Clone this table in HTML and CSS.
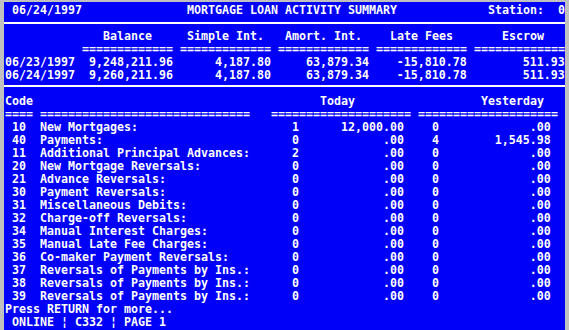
FILE: index.html
```html
<!DOCTYPE html>
<html>
<head>
<meta charset="utf-8">
<title>Mortgage Loan Activity Summary</title>
<link rel="stylesheet" href="styles.css">
</head>
<body>
<div class="window">
  <div class="screen">
    <div class="row title"><span class="date"> 06/24/1997</span><span class="heading">MORTGAGE LOAN ACTIVITY SUMMARY</span><span class="station">Station:  0</span></div>
    <div class="rule"></div>
    <div class="row pre">              Balance     Simple Int.   Amort. Int.    Late Fees       Escrow</div>
    <div class="row pre">           ============= ============= ============= ============= =============</div>
    <div class="row sum"><span>06/23/1997</span><span>9,248,211.96</span><span>4,187.80</span><span>63,879.34</span><span>-15,810.78</span><span>511.93</span></div>
    <div class="row sum"><span>06/24/1997</span><span>9,260,211.96</span><span>4,187.80</span><span>63,879.34</span><span>-15,810.78</span><span>511.93</span></div>
    <div class="rule rule2"></div>
    <div class="row pre">Code                                         Today                  Yesterday</div>
    <div class="row pre">==== ==============================   ==================== ====================</div>
    <div class="row act"><span>10</span><span>New Mortgages:</span><span>1</span><span>12,000.00</span><span>0</span><span>.00</span></div>
    <div class="row act"><span>40</span><span>Payments:</span><span>0</span><span>.00</span><span>4</span><span>1,545.98</span></div>
    <div class="row act"><span>11</span><span>Additional Principal Advances:</span><span>2</span><span>.00</span><span>0</span><span>.00</span></div>
    <div class="row act"><span>20</span><span>New Mortgage Reversals:</span><span>0</span><span>.00</span><span>0</span><span>.00</span></div>
    <div class="row act"><span>21</span><span>Advance Reversals:</span><span>0</span><span>.00</span><span>0</span><span>.00</span></div>
    <div class="row act"><span>30</span><span>Payment Reversals:</span><span>0</span><span>.00</span><span>0</span><span>.00</span></div>
    <div class="row act"><span>31</span><span>Miscellaneous Debits:</span><span>0</span><span>.00</span><span>0</span><span>.00</span></div>
    <div class="row act"><span>32</span><span>Charge-off Reversals:</span><span>0</span><span>.00</span><span>0</span><span>.00</span></div>
    <div class="row act"><span>34</span><span>Manual Interest Charges:</span><span>0</span><span>.00</span><span>0</span><span>.00</span></div>
    <div class="row act"><span>35</span><span>Manual Late Fee Charges:</span><span>0</span><span>.00</span><span>0</span><span>.00</span></div>
    <div class="row act"><span>36</span><span>Co-maker Payment Reversals:</span><span>0</span><span>.00</span><span>0</span><span>.00</span></div>
    <div class="row act"><span>37</span><span>Reversals of Payments by Ins.:</span><span>0</span><span>.00</span><span>0</span><span>.00</span></div>
    <div class="row act"><span>38</span><span>Reversals of Payments by Ins.:</span><span>0</span><span>.00</span><span>0</span><span>.00</span></div>
    <div class="row act"><span>39</span><span>Reversals of Payments by Ins.:</span><span>0</span><span>.00</span><span>0</span><span>.00</span></div>
    <div class="row">Press RETURN for more...</div>
    <div class="row pre"> ONLINE ¦ C332 ¦ PAGE 1</div>
  </div>
</div>
</body>
</html>
```
FILE: styles.css
```css
html, body {
  margin: 0;
  padding: 0;
}
body {
  background: #c0c0c0;
  width: 569px;
  height: 330px;
  overflow: hidden;
}
.window {
  padding: 2px 0 0 4px;
}
.screen {
  width: 561px;
  height: 328px;
  box-sizing: border-box;
  padding: 2px 0 0 1px;
  background: #0000f8;
  color: #ffffff;
  font-family: "DejaVu Sans Mono", monospace;
  font-weight: bold;
  font-size: 11.63px;
  line-height: 13px;
}
.row {
  height: 13px;
  white-space: pre;
}
.title {
  display: grid;
  grid-template-columns: 26ch 43ch 11ch;
}
.rule {
  height: 13px;
  position: relative;
}
.rule::after {
  content: "";
  position: absolute;
  left: -1px;
  right: 0;
  top: 5px;
  height: 2px;
  background: #ffffff;
}
.rule2::after {
  top: 3px;
}
.sum {
  display: grid;
  grid-template-columns: 10ch 14ch 14ch 14ch 14ch 14ch;
}
.sum span {
  text-align: right;
}
.sum span:first-child {
  text-align: left;
}
.act {
  display: grid;
  grid-template-columns: 5ch 36ch 1ch 15ch 4ch 1ch 16ch;
}
.act span:first-child {
  padding-left: 1ch;
}
.act span:nth-child(4),
.act span:nth-child(6) {
  text-align: right;
}
.act span:nth-child(5) {
  grid-column: 6;
}
```
